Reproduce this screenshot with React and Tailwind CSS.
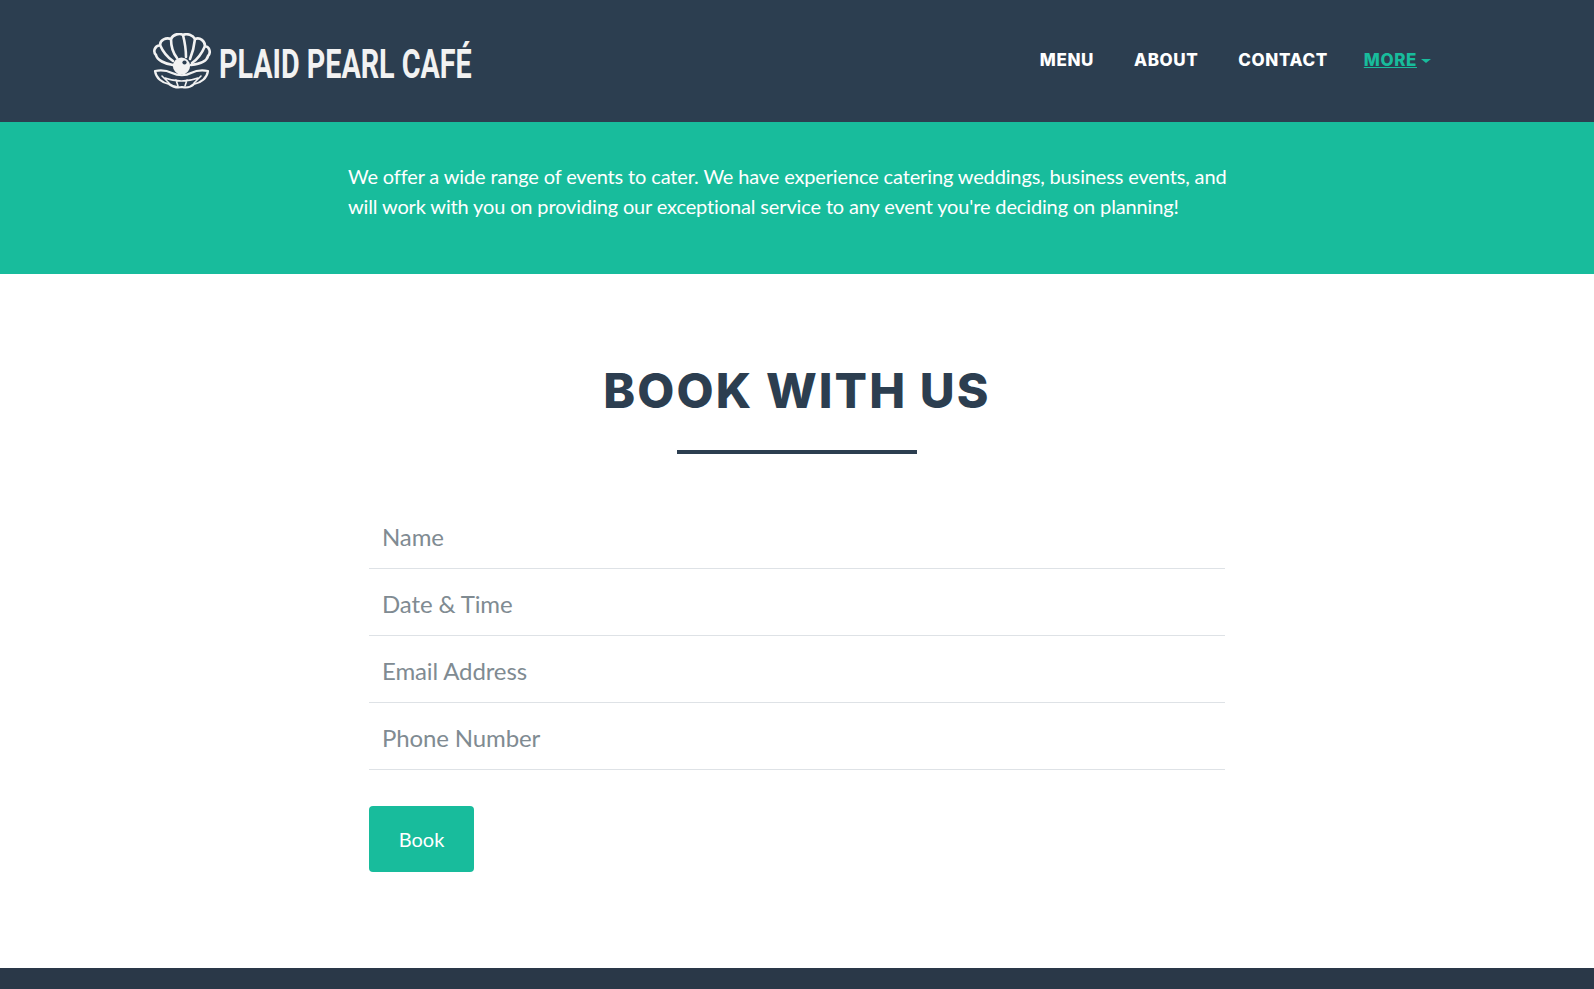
import React from "react";

const FIELDS = ["Name", "Date & Time", "Email Address", "Phone Number"];

function ShellLogo() {
  return (
    <svg width="58" height="56" viewBox="0 0 58 56" fill="none" stroke="#f2f2f2" strokeWidth="2.6" strokeLinejoin="round" strokeLinecap="round">
      {/* fan of the shell */}
      <path d="M20 32 C12 31 4 27 3 22 C0 19 1 13 7 12 C7 7 13 4 18 6 C20 1 27 0 30 2 C34 0 40 2 42 6 C47 4 52 8 52 13 C57 14 58 20 55 23 C54 28 46 31 38 32" />
      <path d="M7 12 C10 19 14 24 20 28" />
      <path d="M18 6 C18 14 20 20 24 25" />
      <path d="M30 2 C32 10 33 17 33 24" />
      <path d="M42 6 C41 15 39 21 37 26" />
      <path d="M52 13 C49 20 45 26 39 30" />
      {/* pearl */}
      <circle cx="28.5" cy="33" r="8.6" fill="#f2f2f2" stroke="none" />
      <circle cx="31.5" cy="29.5" r="2.1" fill="#2c3e50" stroke="none" />
      {/* lower shell */}
      <path d="M19 40 C13 37 7 37 2 38 C3 45 9 50 16 51 C20 54 25 55 29 54 C33 55 38 54 41 51 C48 50 54 45 55 38 C50 37 44 37 38 40 C33 43 25 43 19 40 Z" strokeWidth="2.2" />
      <path d="M9 43 L16 50 M48 43 L41 50 M12 45 C22 49 35 49 45 45 M23 47 L25 53 M34 47 L32 53" strokeWidth="1.6" />
    </svg>
  );
}

export default function App() {
  return (
    <div className="min-h-[989px] bg-white font-['Lato',sans-serif] overflow-hidden">
      <header className="h-[122px] bg-[#2c3e50] flex items-center justify-between pl-[153px] pr-[163px]">
        <div className="flex items-center gap-[8px]">
          <ShellLogo />
          <span className="w-[254px] mt-[6px] text-[41px] leading-none font-bold text-[#f2f2f2] whitespace-nowrap font-['Roboto',sans-serif] origin-left scale-x-[0.7] inline-block">
            PLAID PEARL CAFÉ
          </span>
        </div>
        <nav className="flex items-center font-['Inter',sans-serif] font-extrabold text-[17px] tracking-[0.6px] text-white">
          <a className="mr-[40px]">MENU</a>
          <a className="mr-[40px]">ABOUT</a>
          <a className="mr-[36px]">CONTACT</a>
          <a className="text-[#18bc9c] underline">MORE</a>
          <span className="ml-[4px] border-x-[5px] border-t-[4px] border-x-transparent border-t-[#18bc9c]"></span>
        </nav>
      </header>

      <section className="h-[152px] bg-[#18bc9c] pt-[39px] pl-[348px]">
        <p className="w-[896px] text-[20px] leading-[30px] tracking-[-0.14px] text-white">
          We offer a wide range of events to cater. We have experience catering weddings, business events, and will work with you on providing our exceptional service to any event you're deciding on planning!
        </p>
      </section>

      <main className="h-[694px] flex flex-col items-center pt-[88px]">
        <h2 className="font-['Inter',sans-serif] font-extrabold text-[48px] leading-[58px] tracking-[2.1px] text-[#2c3e50]">BOOK WITH US</h2>
        <div className="mt-[30px] w-[240px] h-[4px] bg-[#2c3e50]"></div>
        <form className="mt-[48px] w-[856px]">
          {FIELDS.map(f => (
            <div key={f} className="h-[67px] pt-[4px] border-b border-[#dee2e6] flex items-center px-[13px] text-[24px] tracking-[-0.12px] text-[#808b92]">
              {f}
            </div>
          ))}
          <button type="button" className="mt-[36px] w-[105px] h-[66px] rounded bg-[#18bc9c] text-white text-[20px]">Book</button>
        </form>
      </main>

      <footer className="h-[21px] bg-[#2a3848]"></footer>
    </div>
  );
}
